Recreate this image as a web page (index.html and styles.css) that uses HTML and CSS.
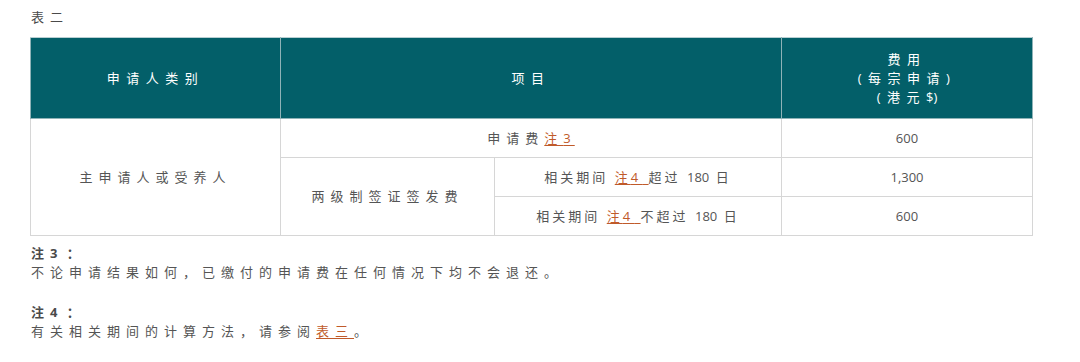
FILE: index.html
```html
<!DOCTYPE html>
<html lang="zh-CN">
<head>
<meta charset="utf-8">
<title>表二</title>
<link rel="stylesheet" href="styles.css">
</head>
<body>
<div class="page">
  <p class="caption">表二</p>
  <table class="fees">
    <colgroup>
      <col class="col-a">
      <col class="col-b">
      <col class="col-c">
      <col class="col-d">
    </colgroup>
    <thead>
      <tr>
        <th>申请人类别</th>
        <th colspan="2">项目</th>
        <th>费用<br>(每宗申请)<br>(港元<span class="num">$)</span></th>
      </tr>
    </thead>
    <tbody>
      <tr>
        <td rowspan="3">主申请人或受养人</td>
        <td colspan="2">申请费<a class="note-link" href="#n3">注<span class="d">3</span></a></td>
        <td class="num">600</td>
      </tr>
      <tr>
        <td rowspan="2">两级制签证签发费</td>
        <td class="tight">相关期间 <a class="note-link" href="#n4">注<span class="d">4</span>&nbsp;</a>超过 <span class="num">180</span> 日</td>
        <td class="num">1,300</td>
      </tr>
      <tr>
        <td class="tight">相关期间 <a class="note-link" href="#n4">注<span class="d">4</span>&nbsp;</a>不超过 <span class="num">180</span> 日</td>
        <td class="num">600</td>
      </tr>
    </tbody>
  </table>
  <div class="notes">
    <div class="note" id="n3">
      <p class="note-title">注<span class="d">3</span> ：</p>
      <p>不论申请结果如何，已缴付的申请费在任何情况下均不会退还。</p>
    </div>
    <div class="note" id="n4">
      <p class="note-title">注<span class="d">4</span> ：</p>
      <p>有关相关期间的计算方法，请参阅<a class="note-link" href="#t3">表三</a>。</p>
    </div>
  </div>
</div>
</body>
</html>
```

FILE: styles.css
```css
html, body {
  margin: 0;
  padding: 0;
  background: #ffffff;
}

body {
  font-family: "Open Sans", "Noto Sans CJK SC", sans-serif;
  font-size: 13px;
  color: #555555;
}

.page {
  padding: 7px 0 0 30px;
}

.caption {
  margin: 0 0 10px 1px;
  line-height: 20px;
  letter-spacing: 6px;
  color: #4a4a4a;
}

.fees {
  width: 1002px;
  border-collapse: collapse;
  table-layout: fixed;
  border: 1px solid #d6d6d6;
}

.col-a { width: 250px; }
.col-b { width: 214px; }
.col-c { width: 287px; }
.col-d { width: 251px; }

.fees th {
  background: #035f69;
  color: #ffffff;
  font-weight: normal;
  height: 80px;
  padding: 0;
  line-height: 19px;
  letter-spacing: 6.5px;
  text-align: center;
  vertical-align: middle;
  border: 1px solid #8fb3b7;
  border-top-color: #b9cfd2;
}

.fees td {
  height: 38px;
  padding: 0;
  line-height: 19px;
  letter-spacing: 6px;
  text-align: center;
  vertical-align: middle;
  border: 1px solid #d6d6d6;
  color: #555555;
}

.fees td.tight {
  letter-spacing: 3px;
}

.num {
  letter-spacing: 0;
}

.fees td.num {
  letter-spacing: 0;
  color: #555555;
}

.note-link {
  color: #c05a2a;
  text-decoration: underline;
  text-underline-offset: 2px;
}

.note-link .d {
  letter-spacing: 4px;
}

.notes {
  margin-top: 8px;
  padding-left: 1px;
}

.note {
  margin-bottom: 21px;
}

.note p {
  margin: 0;
  line-height: 19px;
  letter-spacing: 6px;
}

.note-title {
  font-weight: bold;
  color: #4a4a4a;
}

.note-title .d {
  letter-spacing: 0;
}
```
